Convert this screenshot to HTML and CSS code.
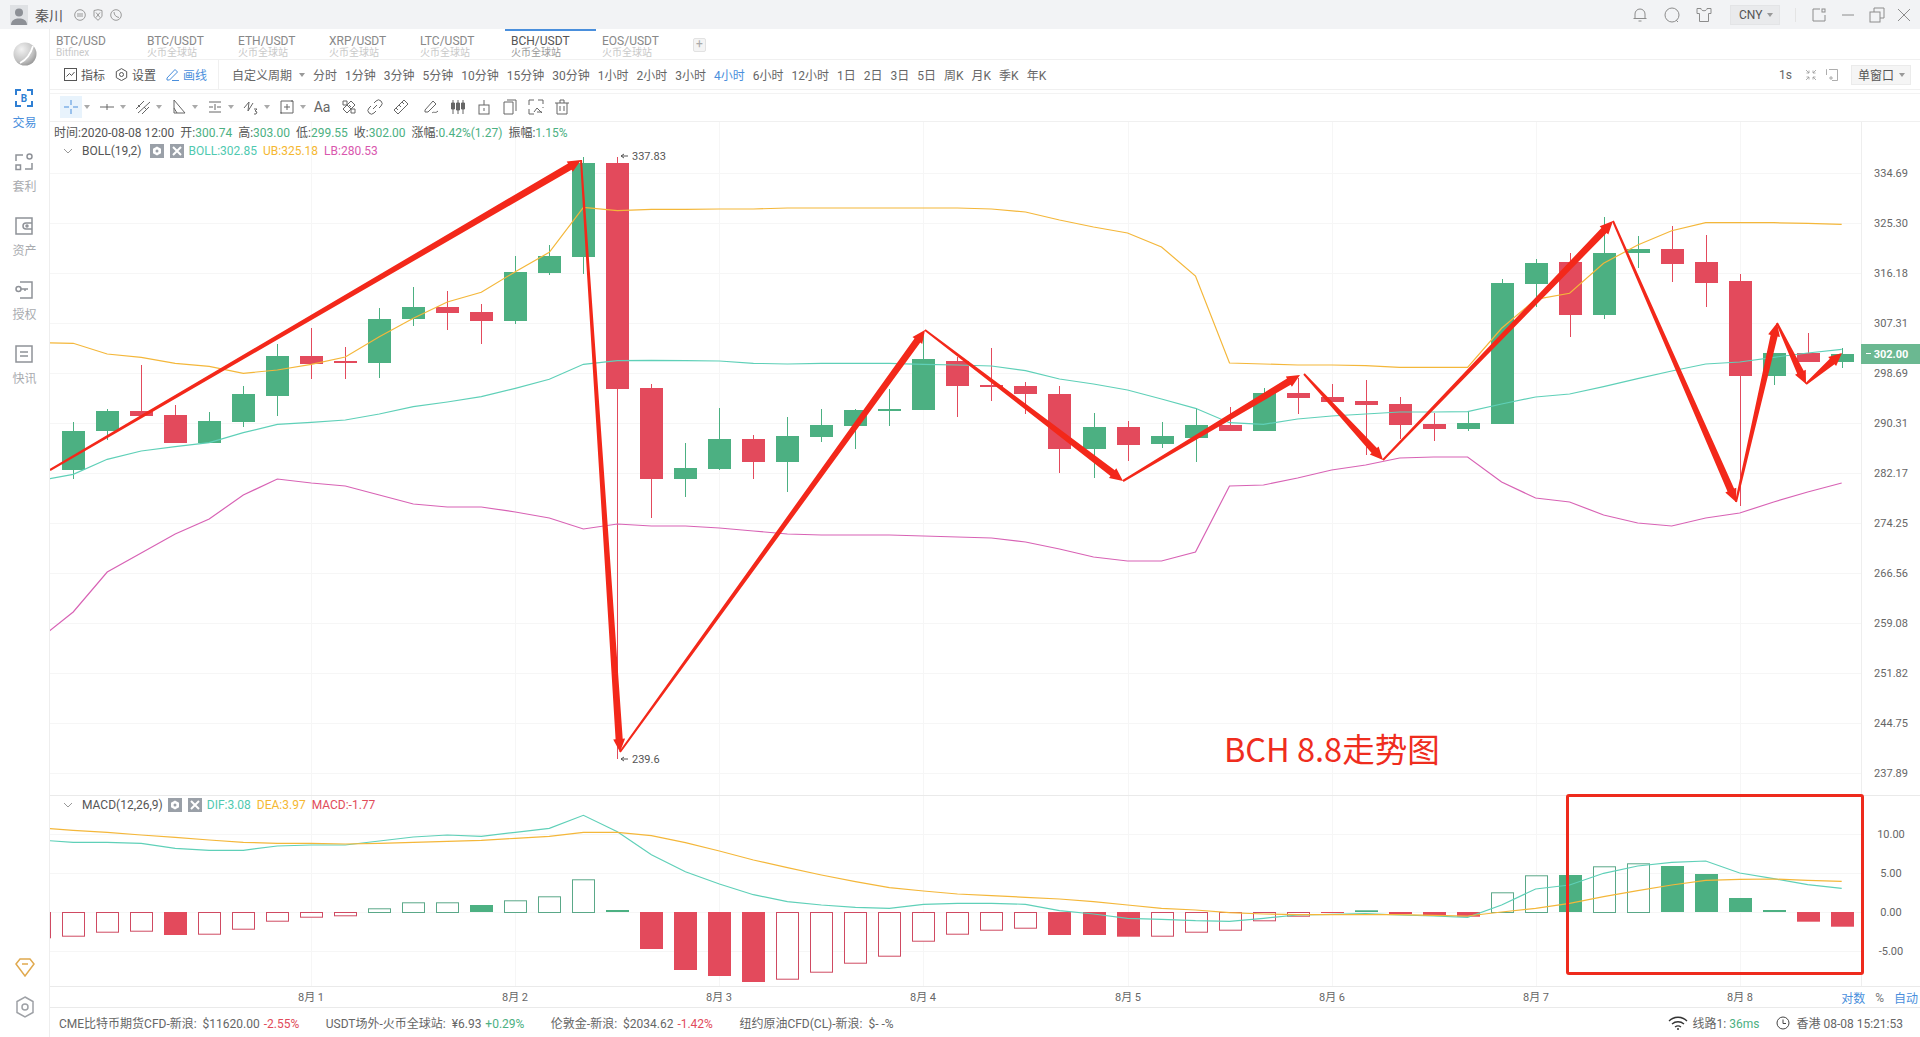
FILE: index.html
```html
<!DOCTYPE html>
<html lang="zh-CN">
<head>
<meta charset="UTF-8">
<title>BCH/USDT</title>
<link rel="stylesheet" href="styles.css">
</head>
<body>
<header class="titlebar">
    <svg class="avatar" viewBox="0 0 18 20"><rect width="18" height="20" fill="#dfe1e4"/><circle cx="9" cy="7.5" r="4" fill="#8d9096"/><path d="M1 20c0-5 4-6.5 8-6.5s8 1.500 8 6.500z" fill="#8d9096"/></svg>
    <span class="user-name">秦川</span>
    <div class="badges">
        <svg class="ico12" viewBox="0 0 12 12"><circle cx="6" cy="6" r="5.300"/><path d="M4 4v4M6 4v4M8 4v4"/></svg>
        <svg class="ico12" viewBox="0 0 12 12"><path d="M2 1.500 6 .7l4 .8v6L6 11.300 2 7.500z"/><path d="m4 3.500 4 5M8 3.500l-4 5"/></svg>
        <svg class="ico12" viewBox="0 0 12 12"><circle cx="6" cy="6" r="5.300"/><path d="M4 3c0 3 2 5 5 5.500"/></svg>
    </div>
    <div class="title-right">
        <svg class="ico16" viewBox="0 0 16 16"><path d="M3 11.500V7a5 5 0 0 1 10 0v4.500zM1.500 11.500h13M6.500 14h3"/></svg>
        <svg class="ico16" viewBox="0 0 16 16"><circle cx="8" cy="8" r="7"/><path d="m12 13 2 2"/></svg>
        <svg class="ico16" viewBox="0 0 16 16"><path d="M5 1.500H1v5h2.500v8h9v-8H15v-5h-4c0 3-6 3-6 0z"/></svg>
        <div class="currency">CNY<i class="caret"></i></div>
        <span class="title-sep"></span>
        <svg class="ico14" viewBox="0 0 14 14"><path d="M8 1H1v12h12V7"/><rect x="10" y="1" width="3" height="3"/></svg>
        <svg class="ico14" viewBox="0 0 14 14"><path d="M1 7h12"/></svg>
        <svg class="ico16" viewBox="0 0 16 16"><rect x="1" y="5" width="10" height="10"/><path d="M5 5V1h10v10h-4"/></svg>
        <svg class="ico14" viewBox="0 0 14 14"><path d="m1 1 12 12M13 1 1 13"/></svg>
    </div>
</header>

<div class="shell">
    <nav class="sidebar">
        <svg class="logo" viewBox="0 0 24 24"><defs><radialGradient id="globe" cx=".35" cy=".3" r=".85"><stop offset="0" stop-color="#f2f2f2"/><stop offset=".6" stop-color="#c4c4c4"/><stop offset="1" stop-color="#858585"/></radialGradient></defs><circle cx="12" cy="12" r="11.500" fill="url(#globe)"/><path d="M7 21C13 18 18 11 20 4" stroke="#fff" stroke-width="1.800" fill="none"/></svg>
        <a class="nav-item nav-active">
            <svg viewBox="0 0 18 18"><path d="M6 1H1v5M12 1h5v5M6 17H1v-5M12 17h5v-5" fill="none" stroke="currentColor" stroke-width="2"/><text x="9" y="13" text-anchor="middle" class="nav-b">B</text></svg>
            <span>交易</span>
        </a>
        <a class="nav-item">
            <svg viewBox="0 0 18 18"><path d="M8 2H1v6M10 16h7v-6"/><circle cx="14.500" cy="3.500" r="2.500"/><rect x="1" y="12" width="4.500" height="4.500"/></svg>
            <span>套利</span>
        </a>
        <a class="nav-item">
            <svg viewBox="0 0 18 18"><path d="M17 1H1v16h16z"/><path d="M17 6h-6a3 3 0 0 0 0 6h6"/><circle cx="12" cy="9" r="1"/></svg>
            <span>资产</span>
        </a>
        <a class="nav-item">
            <svg viewBox="0 0 18 18"><circle cx="3.500" cy="8" r="2.500"/><path d="M6 8h7M10 8v2M5 1h12v16H5"/></svg>
            <span>授权</span>
        </a>
        <a class="nav-item">
            <svg viewBox="0 0 18 18"><rect x="1" y="1" width="16" height="16"/><path d="M5 7h8M5 11h8"/></svg>
            <span>快讯</span>
        </a>
        <svg class="side-gem" viewBox="0 0 20 20"><path d="M1 7 5 2h10l4 5-9 12z"/><path d="M7 7h6"/></svg>
        <svg class="side-hex" viewBox="0 0 20 22"><path d="m10 1 8 4.500v11L10 21l-8-4.500v-11z"/><circle cx="10" cy="11" r="3"/></svg>
    </nav>

    <main class="workspace">
        <div class="tabs">
            <div class="tab">BTC/USD<small>Bitfinex</small></div>
            <div class="tab">BTC/USDT<small>火币全球站</small></div>
            <div class="tab">ETH/USDT<small>火币全球站</small></div>
            <div class="tab">XRP/USDT<small>火币全球站</small></div>
            <div class="tab">LTC/USDT<small>火币全球站</small></div>
            <div class="tab tab-active">BCH/USDT<small>火币全球站</small></div>
            <div class="tab">EOS/USDT<small>火币全球站</small></div>
            <div class="tab-add">+</div>
        </div>

        <div class="periods">
            <div class="tools">
                <span class="tool"><svg class="ico13" viewBox="0 0 13 13"><rect x=".5" y=".5" width="12" height="12"/><path d="m2.500 8.500 3-3 2 2 3-3.500"/></svg>指标</span>
                <span class="tool"><svg class="ico13" viewBox="0 0 13 13"><path d="m6.500.6 5.200 3v6l-5.200 3-5.200-3v-6z"/><circle cx="6.500" cy="6.500" r="2"/></svg>设置</span>
                <span class="tool tool-on"><svg class="ico13" viewBox="0 0 13 13"><path d="M1 10 9 1.500l2.500 2.500-8 8H1zM6 12.500h7"/></svg>画线</span>
            </div>
            <div class="period-list">
                <span class="custom-period">自定义周期<i class="caret"></i></span>
                <span>分时</span><span>1分钟</span><span>3分钟</span><span>5分钟</span><span>10分钟</span><span>15分钟</span><span>30分钟</span>
                <span>1小时</span><span>2小时</span><span>3小时</span><span class="period-on">4小时</span><span>6小时</span><span>12小时</span>
                <span>1日</span><span>2日</span><span>3日</span><span>5日</span><span>周K</span><span>月K</span><span>季K</span><span>年K</span>
            </div>
            <div class="period-right">
                <span>1s</span>
                <svg class="ico12" viewBox="0 0 12 12"><path d="M1 1 4 4M4 1.500V4H1.500M11 1 8 4M8 1.500V4h2.500M1 11l3-3M4 10.500V8H1.500M11 11 8 8M8 10.500V8h2.500"/></svg>
                <svg class="ico12 fit-icon" viewBox="0 0 12 12"><path d="M3 .5h8.500V11.500H6M3 9h4M5 7v4M.5 6V.5H1"/></svg>
                <div class="window-btn">单窗口<i class="caret"></i></div>
            </div>
        </div>

        <div class="drawbar">
            <div class="draw-tool draw-on"><svg viewBox="0 0 16 16"><path d="M8 1v5M8 10v5M1 8h5M10 8h5"/></svg></div><i class="caret"></i>
            <div class="draw-tool"><svg viewBox="0 0 16 16"><path d="M1 8h14M8 5v6"/></svg></div><i class="caret"></i>
            <div class="draw-tool"><svg viewBox="0 0 16 16"><path d="m1 10 8-8M3 14 15 3M7 15l7-7M3 6l2 2M9 8l2 2"/></svg></div><i class="caret"></i>
            <div class="draw-tool"><svg viewBox="0 0 16 16"><path d="M3 1v13h11zM3 9l3 5"/></svg></div><i class="caret"></i>
            <div class="draw-tool"><svg viewBox="0 0 16 16"><path d="M2 3h12M2 8h4M10 8h4M2 13h12M8 5v6"/></svg></div><i class="caret"></i>
            <div class="draw-tool"><svg viewBox="0 0 16 16"><path d="m1 9 5-6-1 9 5-8M11 10h3l-2 2 2 1-1 2h-2"/></svg></div><i class="caret"></i>
            <div class="draw-tool"><svg viewBox="0 0 16 16"><path d="M2 2h12v12H2zM8 5v6M5 8h6M1 14h2M13 1v2"/></svg></div><i class="caret"></i>
            <span class="draw-text">Aa</span>
            <div class="draw-item"><svg viewBox="0 0 16 16"><path d="M2 2h4v4H2zM10 10h4v4h-4zM6 6l4 4M10 2l4 4-8 8-4-4zM8 6l2 2"/></svg></div>
            <div class="draw-item"><svg viewBox="0 0 16 16"><path d="M6 10 10 6M7 4l2-2a3.500 3.500 0 0 1 5 5l-2 2M9 12l-2 2a3.500 3.500 0 0 1-5-5l2-2"/></svg></div>
            <div class="draw-item"><svg viewBox="0 0 16 16"><path d="m11 1 4 4L5 15l-4-4zM6 6l2 2M9 3l2 2M3 9l2 2"/></svg></div>
            <div class="draw-item draw-wide"><svg viewBox="0 0 16 16"><path d="M2 11 10 2l3 3-8 8H2zM9 14c2-2 3 1 6-2"/></svg></div>
            <div class="draw-item"><svg viewBox="0 0 16 16"><path d="M3 1v14M8 1v14M13 1v14"/><path d="M1.500 4h3v6h-3zM6.500 4h3v7h-3zM11.500 4h3v6h-3z" fill="#666"/></svg></div>
            <div class="draw-item"><svg viewBox="0 0 16 16"><rect x="3" y="6" width="10" height="9"/><path d="M8 1v5M8 9v3"/></svg></div>
            <div class="draw-item"><svg viewBox="0 0 16 16"><path d="M5 1h9v11M2 3h9v12H2z"/></svg></div>
            <div class="draw-item"><svg viewBox="0 0 16 16"><path d="M1 6V1h5M10 1h5v4M1 10v5h5M15 8v1M6 13l3-4 3 3 2 2M9 13h5"/></svg></div>
            <div class="draw-item"><svg viewBox="0 0 16 16"><path d="M1 4h14M6 4V1h4v3M3 4v11h10V4M6 7v5M10 7v5"/></svg></div>
        </div>

        <section class="chart">
            <svg id="chart-canvas" width="1870" height="886" viewBox="50 122 1870 886"></svg>
            <div class="quote-line">时间:2020-08-08 12:00<span>开:<b>300.74</b></span><span>高:<b>303.00</b></span><span>低:<b>299.55</b></span><span>收:<b>302.00</b></span><span>涨幅:<b>0.42%(1.27)</b></span><span>振幅:<b>1.15%</b></span></div>
            <div class="study study-boll">
                <svg class="chev" viewBox="0 0 10 6"><path d="m1 1 4 4 4-4"/></svg>
                <span class="study-name">BOLL(19,2)</span>
                <svg class="study-btn" viewBox="0 0 14 14"><rect width="14" height="14"/><path d="m7 2.500 4 2.200v4.600l-4 2.200-4-2.200V4.700z" class="mark-fill"/><circle cx="7" cy="7" r="1.500"/></svg>
                <svg class="study-btn" viewBox="0 0 14 14"><rect width="14" height="14"/><path d="m3 3 8 8M11 3l-8 8" class="mark"/></svg>
                <span class="c-teal">BOLL:302.85</span><span class="c-orange">UB:325.18</span><span class="c-pink">LB:280.53</span>
            </div>
            <div class="annotation">BCH 8.8走势图</div>
            <div class="focus-box"></div>
            <div class="study study-macd">
                <svg class="chev" viewBox="0 0 10 6"><path d="m1 1 4 4 4-4"/></svg>
                <span class="study-name">MACD(12,26,9)</span>
                <svg class="study-btn" viewBox="0 0 14 14"><rect width="14" height="14"/><path d="m7 2.500 4 2.200v4.600l-4 2.200-4-2.200V4.700z" class="mark-fill"/><circle cx="7" cy="7" r="1.500"/></svg>
                <svg class="study-btn" viewBox="0 0 14 14"><rect width="14" height="14"/><path d="m3 3 8 8M11 3l-8 8" class="mark"/></svg>
                <span class="c-teal">DIF:3.08</span><span class="c-orange">DEA:3.97</span><span class="c-red">MACD:-1.77</span>
            </div>
            <div class="scale-modes"><span>对数</span><span class="mode-off">%</span><span>自动</span></div>
        </section>

        <footer class="footer">
            <div class="ticker">CME比特币期货CFD-新浪:&nbsp; $11620.00 <em class="down">-2.55%</em></div>
            <div class="ticker">USDT场外-火币全球站:&nbsp; ¥6.93 <em class="up">+0.29%</em></div>
            <div class="ticker">伦敦金-新浪:&nbsp; $2034.62 <em class="down">-1.42%</em></div>
            <div class="ticker">纽约原油CFD(CL)-新浪:&nbsp; $- -%</div>
            <div class="status">
                <svg class="wifi" viewBox="0 0 20 14"><path d="M1 5c5-5 13-5 18 0M4 8c3.500-3 8.500-3 12 0M7 11c2-1.500 4-1.500 6 0"/><circle cx="10" cy="13" r="1" class="dot"/></svg>
                <span>线路1: <em class="up">36ms</em></span>
                <svg class="clock" viewBox="0 0 14 14"><circle cx="7" cy="7" r="6"/><path d="M7 3.500V7.500h3"/></svg>
                <span>香港 08-08 15:21:53</span>
            </div>
        </footer>
    </main>
</div>
<script src="chart.js"></script>
</body>
</html>
```

FILE: styles.css
```css
* {
    box-sizing: border-box;
}

body {
    margin: 0;
    height: 1037px;
    overflow: hidden;
    background: #fff;
    color: #666;
    font: 12px Roboto, "Noto Sans CJK SC", sans-serif;
}

svg {
    display: block;
    flex: none;
    fill: none;
    stroke: currentColor;
}

em {
    font-style: normal;
}

.ico12 { width: 12px; height: 12px; }
.ico13 { width: 13px; height: 13px; }
.ico14 { width: 14px; height: 14px; }
.ico16 { width: 16px; height: 16px; }

.caret {
    display: block;
    flex: none;
    width: 0;
    height: 0;
    border: 3px solid transparent;
    border-top: 4px solid #999;
    border-bottom: 0;
}

/* title bar */
.titlebar {
    display: flex;
    align-items: center;
    height: 29px;
    padding-left: 10px;
    background: #f2f3f5;
}

.avatar {
    width: 18px;
    height: 20px;
    stroke: none;
}

.user-name {
    margin-left: 7px;
    font-size: 14px;
    color: #555;
}

.badges {
    display: flex;
    gap: 6px;
    margin-left: 11px;
    color: #9a9a9a;
}

.title-right {
    display: flex;
    align-items: center;
    gap: 16px;
    margin-left: auto;
    padding-right: 9px;
    color: #8c8c8c;
}

.title-right > :nth-child(3) { margin-right: 2px; }
.title-right > :nth-child(4) { margin-right: -1px; }
.title-right > :nth-child(6) { margin-right: -1px; }
.title-right > :nth-child(7) { margin-right: -2px; }
.title-right > :nth-child(8) { margin-right: -4px; }

.currency {
    display: flex;
    align-items: center;
    gap: 5px;
    width: 50px;
    height: 20px;
    padding-left: 8px;
    background: #e9eaec;
    border: 1px solid #e3e4e6;
    color: #555;
}

.title-sep {
    width: 1px;
    height: 14px;
    background: #e4e4e4;
}

/* left rail */
.shell {
    display: flex;
    height: 1008px;
}

.sidebar {
    display: flex;
    flex-direction: column;
    align-items: center;
    flex: none;
    width: 50px;
    border-right: 1px solid #eee;
    color: #9b9ea3;
}

.logo {
    width: 24px;
    height: 24px;
    margin: 13px 0 19px;
    stroke: none;
}

.nav-item {
    display: flex;
    flex-direction: column;
    align-items: center;
    height: 64px;
    padding-top: 4px;
    color: #a9abaf;
}

.nav-item svg {
    width: 18px;
    height: 18px;
    stroke: #8f9298;
    stroke-width: 1.500;
}

.nav-item span {
    margin-top: 8px;
    line-height: 16px;
}

.nav-active {
    color: #4a8fdc;
}

.nav-active svg {
    stroke: none;
    color: #2f7fd3;
}

.nav-b {
    font: bold 10px Roboto, sans-serif;
    fill: #2f7fd3;
    stroke: none;
}

.side-gem {
    width: 20px;
    height: 20px;
    margin-top: auto;
    color: #e0a94e;
    stroke-width: 1.500;
}

.side-hex {
    width: 20px;
    height: 22px;
    margin: 19px 0 19px;
    color: #9ea1a6;
    stroke-width: 1.500;
}

/* tabs and toolbars */
.workspace {
    display: flex;
    flex-direction: column;
    flex: 1;
    min-width: 0;
}

.tabs {
    display: flex;
    flex: none;
    height: 31px;
    border-bottom: 1px solid #f0f0f0;
}

.tab {
    width: 91px;
    padding: 4px 0 0 6px;
    border-top: 2px solid transparent;
    color: #888;
    line-height: 13px;
}

.tab small {
    display: block;
    font-size: 10px;
    line-height: 10px;
    color: #c9c9c9;
}

.tab-active {
    border-top-color: #4a8fdc;
    color: #555;
}

.tab-active small {
    color: #999;
}

.tab-add {
    width: 13px;
    height: 14px;
    margin: 9px 0 0 6px;
    border: 1px solid #e2e2e2;
    border-radius: 2px;
    background: #f4f4f4;
    color: #aaa;
    text-align: center;
    line-height: 11px;
}

.periods {
    display: flex;
    align-items: center;
    flex: none;
    height: 30px;
    border-bottom: 1px solid #f0f0f0;
}

.tools {
    display: flex;
    align-items: center;
    gap: 10px;
    height: 100%;
    width: 169px;
    padding-left: 14px;
    border-right: 1px solid #f0f0f0;
    color: #555;
}

.tool {
    display: flex;
    align-items: center;
    gap: 4px;
}

.tool-on {
    color: #4a8fdc;
}

.period-list {
    display: flex;
    align-items: center;
    gap: 8px;
    margin-left: 13px;
}

.custom-period {
    display: flex;
    align-items: center;
    gap: 7px;
}

.period-on {
    color: #4a8fdc;
}

.period-right {
    display: flex;
    align-items: center;
    gap: 13px;
    margin-left: auto;
    padding-right: 9px;
}

.period-right .ico12 {
    color: #999;
    stroke-width: .800;
}

.period-right .fit-icon {
    margin-left: -4px;
}

.window-btn {
    display: flex;
    align-items: center;
    gap: 5px;
    width: 60px;
    height: 20px;
    padding-left: 6px;
    background: #f5f5f5;
    border: 1px solid #ebebeb;
    color: #555;
}

.drawbar {
    display: flex;
    align-items: center;
    flex: none;
    height: 29px;
    margin-top: 3px;
    padding: 0 0 2px 10px;
    border-top: 1px solid #f3f3f3;
    border-bottom: 1px solid #f0f0f0;
    color: #666;
}

.drawbar .caret {
    margin: 0 6px 0 2px;
    border-top-color: #aaa;
}

.draw-tool {
    display: flex;
    align-items: center;
    justify-content: center;
    width: 22px;
    height: 22px;
}

.draw-on {
    background: #e8f3fc;
    color: #4a8fdc;
}

.draw-tool svg,
.draw-item svg {
    width: 16px;
    height: 16px;
}

.draw-text {
    width: 20px;
    font-size: 14px;
    text-align: center;
}

.draw-item {
    display: flex;
    justify-content: center;
    width: 26px;
}

.draw-text + .draw-item {
    margin-left: 4px;
}

.draw-wide {
    width: 34px;
    margin-right: -3px;
}

/* chart */
.chart {
    position: relative;
    flex: none;
    height: 886px;
    border-bottom: 1px solid #eaeaea;
    overflow: hidden;
}

#chart-canvas {
    stroke: none;
}

.quote-line {
    position: absolute;
    top: 1px;
    left: 4px;
    display: flex;
    gap: 6px;
    color: #555;
    white-space: nowrap;
}

.quote-line b {
    font-weight: 400;
    color: #4cb082;
}

.study {
    position: absolute;
    left: 13px;
    display: flex;
    align-items: center;
    gap: 6px;
    white-space: nowrap;
}

.study-boll {
    top: 22px;
}

.study-boll .study-name {
    margin-right: 2px;
}

.study-boll .c-teal {
    margin-left: -1px;
}

.study-macd {
    top: 676px;
}

.study-macd .study-name {
    margin-right: -1px;
}

.study-macd .c-teal {
    margin-left: -1px;
}

.chev {
    width: 10px;
    height: 6px;
    margin-right: 3px;
    color: #999;
}

.study-name {
    color: #555;
}

.study-btn {
    width: 14px;
    height: 14px;
    fill: #9aa0a8;
    stroke: none;
}

.study-btn circle {
    fill: #9aa0a8;
}

.mark-fill {
    fill: #fff;
}

.mark {
    stroke: #fff;
    stroke-width: 2;
}

.c-teal { color: #4fc9b0; }
.c-orange { color: #f5b731; }
.c-pink { color: #d957ae; }
.c-red { color: #e14b5a; }

.annotation {
    position: absolute;
    top: 603px;
    left: 1174px;
    font: 32.500px "Noto Sans CJK SC", sans-serif;
    line-height: 46px;
    color: #ef2d1e;
    white-space: nowrap;
}

.focus-box {
    position: absolute;
    top: 672px;
    left: 1516px;
    width: 298px;
    height: 181px;
    border: 3.500px solid #ee2a1c;
    border-radius: 3px;
}

.scale-modes {
    position: absolute;
    right: 2px;
    bottom: 1px;
    display: flex;
    align-items: center;
    gap: 10px;
    color: #4a8fdc;
}

.mode-off {
    color: #777;
}

/* status line */
.footer {
    display: flex;
    align-items: center;
    flex: 1;
    padding-left: 9px;
    gap: 26.500px;
}

.ticker em {
    margin-left: 1px;
}

.down {
    color: #e14b5a;
}

.up {
    color: #4cb082;
}

.status {
    display: flex;
    align-items: center;
    margin-left: auto;
    padding-right: 17px;
}

.wifi {
    width: 20px;
    height: 14px;
    margin-right: 5px;
    color: #333;
    stroke-width: 1.300;
}

.wifi .dot {
    fill: #333;
    stroke: none;
}

.clock {
    width: 14px;
    height: 14px;
    margin: 0 6px 0 17px;
    color: #444;
}
```

FILE: chart.js
```js
// bands, candles and arrows drawn onto one svg, coordinates are page pixels
const STEP = 34.01;
const FIRST = 73.2;
const RIGHT = 1861;
const colX = i => FIRST + STEP * i;
const GREEN = '#4cb082';
const RED = '#e34a5c';

// measured in thirds of a pixel from a base line
const px = (base, ...vals) => vals.map(v => base + v / 3);

// [bodyTop, bodyBottom, wickTop, wickBottom, up]
const seg = (base, rows) => rows.map(r => [base + r[0] / 3, base + r[1] / 3, base + r[2] / 3, base + r[3] / 3, r[4]]);
const candles = [
    ...seg(130, [
        [903, 1019, 877, 1048, 1], [843, 903, 838, 932, 1], [843, 857, 706, 857, 0], [855, 938, 824, 938, 0],
        [873, 938, 845, 938, 1], [792, 875, 769, 893, 1], [678, 797, 642, 857, 1], [678, 701, 594, 746, 0],
        [693, 698, 652, 748, 0], [567, 698, 533, 742, 1], [531, 566, 470, 587, 1], [531, 548, 482, 598, 0],
        [546, 572, 523, 643, 0], [426, 572, 378, 581, 1], [378, 428, 346, 435, 1], [99, 380, 82, 432, 1],
        [99, 776, 82, 1887, 0], [774, 1046, 762, 1164, 0], [1014, 1046, 940, 1103, 1]
    ]),
    ...seg(300, [
        [417, 507, 323, 510, 1], [417, 485, 405, 536, 0], [408, 485, 351, 577, 1], [375, 410, 328, 428, 1],
        [330, 377, 328, 448, 1], [327, 331, 266, 378, 1], [177, 329, 100, 329, 1], [183, 257, 170, 349, 0],
        [256, 260, 143, 302, 0], [258, 281, 245, 342, 0], [282, 446, 258, 520, 0], [381, 446, 340, 535, 1],
        [381, 434, 363, 482, 0], [408, 431, 367, 444, 1], [375, 413, 325, 488, 1], [375, 392, 322, 392, 0],
        [279, 392, 265, 392, 1], [279, 293, 235, 342, 0], [291, 305, 253, 305, 0]
    ]),
    ...seg(200, [
        [604, 614, 540, 764, 0], [612, 674, 591, 716, 0], [672, 686, 638, 723, 0], [669, 686, 633, 692, 1],
        [249, 671, 237, 671, 1], [189, 251, 177, 322, 1], [186, 344, 160, 412, 0], [159, 344, 52, 359, 1],
        [148, 158, 108, 205, 1], [147, 191, 78, 245, 0], [186, 248, 105, 320, 0], [243, 527, 222, 917, 0],
        [459, 527, 459, 556, 1], [459, 485, 398, 485, 0], [462, 485, 443, 503, 1]
    ])
];

// bands start one column left of the first candle
const bollUp = [
    ...px(130, 638, 640, 672, 682, 700, 709, 730, 720, 703, 681, 620, 565, 516, 487, 425, 367, 232, 242, 238, 238),
    209, 209, 208, 208, 208, 208, 208, 208, 209, 212, 220, 227, 233, 247, 276, 363, 364, 365, 365,
    ...px(200, 497, 502, 502, 502, 385, 298, 280, 190, 135, 92, 68, 68, 68, 70, 73)
];
const bollMid = [
    ...px(130, 1052, 1033, 988, 963, 950, 938, 908, 883, 877, 870, 852, 830, 816, 800, 775, 748, 703, 692, 691, 692),
    ...px(300, 183, 190, 192, 190, 190, 190, 193, 195, 198, 212, 237, 252, 270, 297, 325, 368, 373, 357, 348),
    ...px(200, 642, 636, 636, 635, 612, 591, 582, 560, 536, 513, 492, 486, 472, 459, 448)
];
const bollLow = [
    639, 612, 572, 553, 534, 519, 495, 479, 483, 486, 495, 504, 507, 507, 512, 518, 529, 524, 526, 526,
    528, 531, 534, 535, 535, 535, 536, 537, 538, 542, 549, 557, 561, 561, 552, 486, 485, 478, 470,
    465, 458, 457, 457, 482, 498, 502, 515, 523, 526, 518, 513, 502, 492, 483
];

const ZERO = 912;
const hist = [
    -25.3, -23.7, -19.7, -18.7, -23, -21.7, -16.7, -8.7, -4.7, -3.3, 3.7, 9.7, 9.7, 7, 11.7, 15.7, 32.7, 2,
    -37, -58, -64, -70, -66.7, -59.7, -50.7, -43.7, -28.7, -21.7, -17.7, -15.7, -23, -23, -24.7, -23.7, -19.7,
    -17.7, -8.3, -3.7, -1, 1.7, -2, -4, -4.7, 19.7, 36.7, 37, 45.7, 48.7, 46, 38, 14, 2, -9.7, -14.7
];
// filled columns, the others are outlined
const solid = [3, 12, 16, 17, 18, 19, 20, 29, 30, 31, 37, 38, 39, 40, 41, 44, 47, 48, 49, 50, 51, 52];
const dif = [
    ...px(790, 150, 157, 157, 160, 175, 181, 181, 168, 165, 165, 153, 141, 135, 139, 127, 115, 76, 125, 194, 245, 282, 314, 335,
        345, 352, 355, 343, 340, 340, 343, 362, 372, 385, 388, 392, 394, 385, 375, 373, 371, 375, 378, 382, 345, 297, 285),
    ...px(780, 280, 258, 247, 243, 279, 296, 314, 325)
];
const dea = [
    ...px(790, 113, 121, 127, 135, 142, 150, 157, 160, 160, 162, 160, 157, 154, 151, 145, 139, 127, 127, 137, 158, 183, 210, 233,
        255, 275, 293, 303, 312, 317, 322, 327, 335, 345, 355, 360, 368, 372, 374, 374, 374, 374, 376, 378, 366, 355, 340),
    ...px(780, 350, 332, 315, 301, 298, 297, 301, 304)
];

const arrows = [
    [50, 470, 581, 160], [581, 160, 620, 752], [620, 752, 925, 330], [925, 330, 1123, 481],
    [1123, 481, 1300, 375], [1304, 374, 1383, 460], [1383, 460, 1613, 221], [1613, 221, 1736, 502],
    [1736, 502, 1777, 323], [1777, 323, 1806, 384], [1806, 384, 1842, 353]
];

const prices = ['334.69', '325.30', '316.18', '307.31', '298.69', '290.31', '282.17', '274.25', '266.56', '259.08', '251.82', '244.75', '237.89'];
const macdScale = [['10.00', 834], ['5.00', 873], ['0.00', 912], ['-5.00', 951]];

function rect(x, y, w, h, fill) {
    return `<rect x="${x}" y="${y}" width="${w}" height="${h}" fill="${fill}"/>`;
}

function hline(y, x1, x2, color) {
    return rect(x1, y, x2 - x1, 1, color);
}

function label(x, y, str, color, anchor) {
    return `<text x="${x}" y="${y}" fill="${color}" font-size="11" text-anchor="${anchor || 'middle'}">${str}</text>`;
}

function band(values, color) {
    const pts = values.map((v, n) => colX(n - 1).toFixed(1) + ',' + v.toFixed(1)).join(' ');
    return `<polyline points="${pts}" fill="none" stroke="${color}" stroke-width="1.2"/>`;
}

// hand-drawn look of the annotation: thin tail widening towards the head
function arrow(x1, y1, x2, y2) {
    const len = Math.hypot(x2 - x1, y2 - y1);
    const ux = (x2 - x1) / len, uy = (y2 - y1) / len;
    const nx = -uy, ny = ux;
    const neckX = x2 - ux * 13, neckY = y2 - uy * 13;
    const at = (x, y, w) => [(x + nx * w).toFixed(1) + ',' + (y + ny * w).toFixed(1), (x - nx * w).toFixed(1) + ',' + (y - ny * w).toFixed(1)];
    const tail = at(x1, y1, 1), neck = at(neckX, neckY, 3.6), barb = at(neckX, neckY, 6);
    const pts = [tail[0], neck[0], barb[0], x2 + ',' + y2, barb[1], neck[1], tail[1]].join(' ');
    return `<polygon points="${pts}" fill="#f3281a"/>`;
}

let out = '';

// grid
prices.forEach((p, n) => { out += hline(173 + 50 * n, 50, RIGHT, '#f6f6f6'); });
macdScale.forEach(m => { out += hline(m[1], 50, RIGHT, '#f6f6f6'); });
for (let i = 7; i <= 49; i += 6) {
    out += rect(Math.round(colX(i)), 122, 1, 864, '#f6f6f6');
}
out += hline(795, 50, 1920, '#eaeaea') + hline(986, 50, 1920, '#eaeaea');
out += rect(RIGHT, 122, 1, 864, '#eee');

// candles
candles.forEach((c, i) => {
    const x = colX(i), color = c[4] ? GREEN : RED;
    const top = Math.round(c[0]);
    out += rect(Math.round(x), Math.round(c[2]), 1, Math.round(c[3] - c[2]), color);
    out += rect(Math.round(x - 11), top, 23, Math.max(2, Math.round(c[1]) - top), color);
});

// MACD columns
hist.forEach((h, n) => {
    const i = n - 1, x = Math.round(colX(i) - 11);
    const color = h < 0 ? RED : GREEN;
    const top = h < 0 ? ZERO : ZERO - h;
    if (solid.includes(i)) {
        out += rect(x, top, 23, Math.abs(h), color);
    } else {
        out += `<rect x="${x + 0.5}" y="${top + 0.5}" width="22" height="${Math.abs(h)}" fill="#fff" stroke="${h < 0 ? '#cf4a62' : '#5aa888'}" stroke-width="1"/>`;
    }
});

out += band(bollUp, '#f4b73a') + band(bollMid, '#5fd0b8') + band(bollLow, '#d863b5');
out += band(dif, '#5fd0b8') + band(dea, '#f4b73a');
arrows.forEach(a => { out += arrow(a[0], a[1], a[2], a[3]); });

// high and low marks
out += `<path d="M621 156h7M621 156l3-2M621 156l3 2M621 759h7M621 759l3-2M621 759l3 2" stroke="#555" fill="none"/>`;
out += label(632, 160, '337.83', '#555', 'start') + label(632, 763, '239.6', '#555', 'start');

// axes
prices.forEach((p, n) => { out += label(1891, 177 + 50 * n, p, '#666'); });
macdScale.forEach(m => { out += label(1891, m[1] + 4, m[0], '#666'); });
out += rect(RIGHT, 344, 59, 20, '#6bb891') + rect(RIGHT + 5, 353, 5, 1, '#fff');
out += `<text x="1891" y="358" fill="#fff" font-size="11" font-weight="700" text-anchor="middle">302.00</text>`;
for (let d = 1; d <= 8; d++) {
    out += label(Math.round(colX(1 + 6 * d)), 1001, '8月 ' + d, '#666');
}

document.getElementById('chart-canvas').innerHTML = out;
```
